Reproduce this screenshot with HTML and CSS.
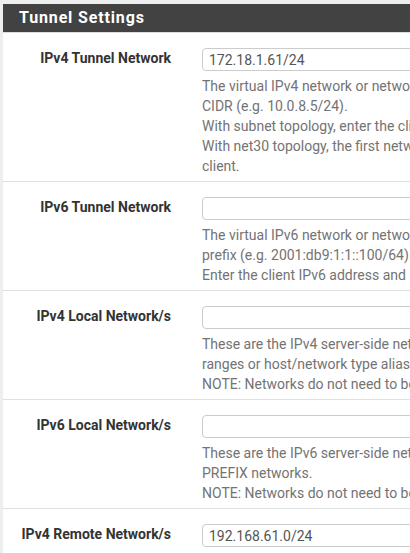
FILE: index.html
```html
<!DOCTYPE html>
<html lang="en">

<head>
  <meta charset="UTF-8">
  <meta name="viewport" content="width=device-width, initial-scale=1.0">
  <title>Tunnel Settings</title>
  <link rel="stylesheet" href="styles.css">
</head>

<body>

  <div class="page">
    <div class="panel">
      <div class="panel-heading">
        <h2 class="panel-title">Tunnel Settings</h2>
      </div>

      <div class="panel-body">
        <div class="form-group">
          <label class="col-label">IPv4 Tunnel Network</label>
          <div class="col-field">
            <input class="form-control" type="text" value="172.18.1.61/24">
            <div class="help-block">
              The virtual IPv4 network or network type alias with a single entry used for private communications between this client and the server expressed using<br>
              CIDR (e.g. 10.0.8.5/24).<br>
              With subnet topology, enter the client IP address and the subnet mask must match the IPv4 Tunnel Network on the server.<br>
              With net30 topology, the first network address of the /30 is assumed to be the server address and the second network address will be assigned to the<br>
              client.
            </div>
          </div>
        </div>

        <div class="form-group">
          <label class="col-label">IPv6 Tunnel Network</label>
          <div class="col-field">
            <input class="form-control" type="text" value="">
            <div class="help-block">
              The virtual IPv6 network or network type alias with a single entry used for private communications between this client and the server expressed using<br>
              prefix (e.g. 2001:db9:1:1::100/64).<br>
              Enter the client IPv6 address and prefix. The prefix must match the IPv6 Tunnel Network prefix on the server.
            </div>
          </div>
        </div>

        <div class="form-group">
          <label class="col-label">IPv4 Local Network/s</label>
          <div class="col-field">
            <input class="form-control" type="text" value="">
            <div class="help-block">
              These are the IPv4 server-side networks that will be accessible from this particular client. Expressed as a comma-separated list of one or more CIDR<br>
              ranges or host/network type aliases.<br>
              NOTE: Networks do not need to be specified here if they have already been defined on the main server configuration.
            </div>
          </div>
        </div>

        <div class="form-group">
          <label class="col-label">IPv6 Local Network/s</label>
          <div class="col-field">
            <input class="form-control" type="text" value="">
            <div class="help-block">
              These are the IPv6 server-side networks that will be accessible from this particular client. Expressed as a comma-separated list of one or more IP/<br>
              PREFIX networks.<br>
              NOTE: Networks do not need to be specified here if they have already been defined on the main server configuration.
            </div>
          </div>
        </div>

        <div class="form-group">
          <label class="col-label">IPv4 Remote Network/s</label>
          <div class="col-field">
            <input class="form-control" type="text" value="192.168.61.0/24">
            <div class="help-block">
              These are the IPv4 client-side networks that will be routed to this client specifically using iroute, so that a site-to-site VPN can be established.
            </div>
          </div>
        </div>
      </div>
    </div>
  </div>

</body>

</html>
```

FILE: styles.css
```css
body {
  margin: 0;
  background-color: #eeeeee;
  font-family: 'Roboto', 'Liberation Sans', sans-serif;
  font-size: 14px;
  line-height: 20px;
  color: #333;
  overflow: hidden;
}

.page {
  padding: 4px 0 0 3px;
  width: 1200px;
}

.panel {
  background-color: #fff;
}

.panel-heading {
  background-color: #424242; /* dark pfSense header */
  height: 28px;
  padding-left: 16px;
  border-bottom: 1px solid #dddddd;
  display: flex;
  align-items: center;
}

.panel-title {
  margin: 0;
  font-size: 16px;
  font-weight: bold;
  color: #fff;
  letter-spacing: 0.85px;
}

.form-group {
  display: flex;
  padding: 15px 0 5px;
  border-bottom: 1px solid #e0e0e0;
}

.col-label {
  flex: none;
  width: 168px;
  padding-right: 15px;
  text-align: right;
  font-weight: bold;
  color: #333;
}

.col-field {
  flex: 1;
  padding-left: 16px;
}

.form-control {
  display: block;
  box-sizing: border-box;
  width: 700px;
  height: 23px;
  margin: 0;
  padding: 0 6px;
  border: 1px solid #cccccc;
  border-radius: 4px;
  font-family: inherit;
  font-size: 14px;
  color: #555;
  background-color: #fff;
}

.help-block {
  margin-top: 5px;
  color: #737373; /* muted help text */
  white-space: nowrap;
}
```
